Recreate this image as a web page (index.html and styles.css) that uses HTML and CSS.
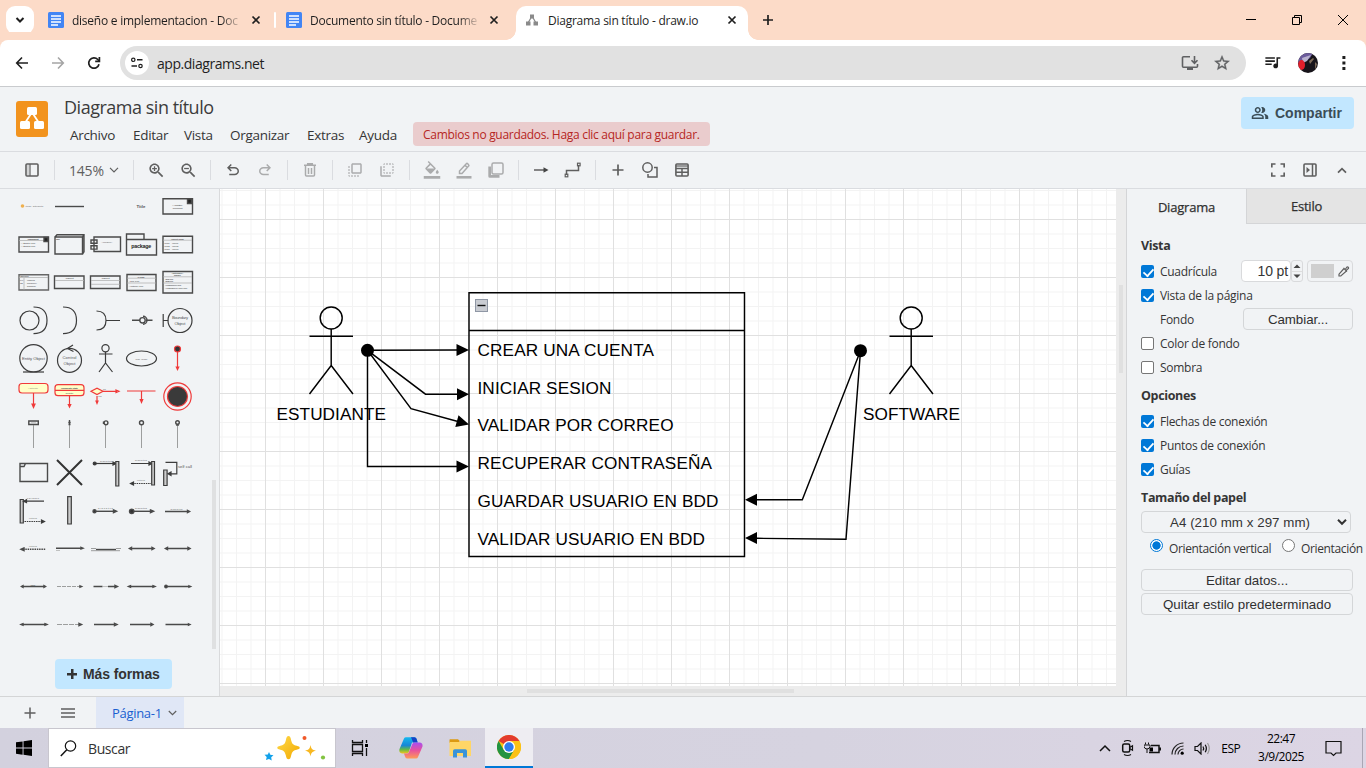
FILE: index.html
```html
<!DOCTYPE html>
<html lang="es">
<head>
<meta charset="utf-8">
<title>Diagrama sin título - draw.io</title>
<link rel="stylesheet" href="styles.css">
</head>
<body>
<div class="screen">
  <div class="tabstrip">
    <div class="tab-search"><svg width="10" height="8" viewBox="0 0 10 8"><path d="M1.5 2l3.500 3.500L8.500 2" class="s dark w2"/></svg></div>
    <div class="tab first">
      <svg width="16" height="16" viewBox="0 0 16 16"><rect width="16" height="16" rx="1.500" fill="#4285f4"/><path d="M3 4h10M3 7h10M3 10h10M3 13h7" stroke="#fff" stroke-width="1.500"/></svg>
      <span class="tab-title fade t1">diseño e implementacion - Doc</span>
      <svg width="10" height="10" viewBox="0 0 10 10"><path d="M1.500 1.500l7 7M8.500 1.500l-7 7" class="s dark w17"/></svg>
    </div>
    <span class="tab-sep"></span>
    <div class="tab second">
      <svg width="16" height="16" viewBox="0 0 16 16"><rect width="16" height="16" rx="1.500" fill="#4285f4"/><path d="M3 4h10M3 7h10M3 10h10M3 13h7" stroke="#fff" stroke-width="1.500"/></svg>
      <span class="tab-title fade t2">Documento sin título - Docume</span>
      <svg width="10" height="10" viewBox="0 0 10 10"><path d="M1.500 1.500l7 7M8.500 1.500l-7 7" class="s dark w17"/></svg>
    </div>
    <div class="tab active">
      <svg width="12" height="12" viewBox="0 0 12 12"><path d="M6 2L2 9M6 2l4 7" stroke="#8a8a8a" stroke-width="1.300"/><path d="M4 .5h4v4H4zM0 7.500h4.500v4H0zM7.500 7.500H12v4H7.500z" fill="#8a8a8a"/></svg>
      <span class="tab-title t3">Diagrama sin título - draw.io</span>
      <svg width="10" height="10" viewBox="0 0 10 10"><path d="M1.500 1.500l7 7M8.500 1.500l-7 7" class="s dark w17"/></svg>
    </div>
    <svg class="newtab" width="12" height="12" viewBox="0 0 12 12"><path d="M6 1v10M1 6h10" class="s dark w17"/></svg>
    <div class="winctl">
      <svg width="12" height="12" viewBox="0 0 12 12"><path d="M1 5.500h10" stroke="#000"/></svg>
      <svg width="12" height="12" viewBox="0 0 12 12"><path d="M1.500 3.500h7v7h-7zM3.500 3.500v-2h7v7h-2" stroke="#000" fill="none"/></svg>
      <svg width="12" height="12" viewBox="0 0 12 12"><path d="M1 1l10 10M11 1L1 11" stroke="#000"/></svg>
    </div>
  </div>

  <div class="navbar">
    <svg width="14" height="14" viewBox="0 0 14 14"><path d="M13 7H2M7 1.500L1.700 7 7 12.500" class="s dark w16"/></svg>
    <svg width="14" height="14" viewBox="0 0 14 14"><path d="M1 7h11M7 1.500L12.300 7 7 12.500" class="s w16" stroke="#a5a5a5"/></svg>
    <svg width="14" height="14" viewBox="0 0 14 14"><path d="M12 8.200A5.200 5.200 0 1 1 10.800 3.500L12.300 5" class="s dark w17"/><path d="M12.400 1v4.300H8.200" class="s dark w17"/></svg>
    <div class="omnibox">
      <span class="site"><svg width="14" height="14" viewBox="0 0 14 14"><circle cx="3.300" cy="3.800" r="1.700" class="s dark"/><circle cx="10.500" cy="10" r="1.700" class="s dark"/><path d="M7 3.800h5.500M1.500 10h5.500" class="s dark w16"/></svg></span>
      <span class="url">app.diagrams.net</span>
      <svg width="18" height="16" viewBox="0 0 18 16"><path d="M9 1.700H2.500a1 1 0 0 0-1 1v8.600a1 1 0 0 0 1 1h13a1 1 0 0 0 1-1V9" class="s w16" stroke="#5f6062"/><path d="M6 12h6v3H6z" fill="#5f6062"/><path d="M13.500 1v7M10.500 5.300l3 3 3-3" class="s w16" stroke="#5f6062"/></svg>
      <svg class="star" width="18" height="18" viewBox="0 0 24 24"><path fill="#5f6062" stroke="#5f6062" stroke-width=".5" d="M22 9.240l-7.190-.62L12 2 9.190 8.630 2 9.240l5.460 4.730L5.820 21 12 17.270 18.180 21l-1.630-7.030L22 9.240zM12 15.400l-3.760 2.270 1-4.280-3.320-2.880 4.380-.38L12 6.100l1.710 4.040 4.380.38-3.320 2.880 1 4.280L12 15.400z"/></svg>
    </div>
    <svg class="music" width="19" height="19" viewBox="0 0 24 24"><path fill="#1f1f1f" d="M15 6H3v2h12V6zm0 4H3v2h12v-2zM3 16h8v-2H3v2zM17 6v8.180c-.31-.11-.65-.18-1-.18-1.660 0-3 1.340-3 3s1.340 3 3 3 3-1.340 3-3V8h3V6h-5z" transform="translate(0 -2)"/></svg>
    <svg class="avatar" width="20" height="20" viewBox="0 0 20 20"><defs><clipPath id="av"><circle cx="10" cy="10" r="10"/></clipPath></defs><g clip-path="url(#av)"><path fill="#17141a" d="M0 0h20v20H0z"/><path fill="#6c5c9c" d="M0 0h15L12 5 8 8 0 10z"/><path fill="#b9b3cf" d="M4 5l9-3-4 6-4 2z"/><ellipse cx="3.500" cy="12" rx="3.500" ry="5" fill="#e21f2b"/><path fill="#7c6a58" d="M11 8l4-3 1 1-4 5zM17 9l2 2-2 6z"/></g></svg>
    <svg class="dots" width="4" height="16" viewBox="0 0 4 16"><path fill="#1f1f1f" d="M.4 1h3v3h-3zM.4 6.500h3v3h-3zM.4 12h3v3h-3z"/></svg>
  </div>

  <div class="apphead">
    <svg class="logo" width="32" height="36" viewBox="0 0 32 36"><rect width="32" height="36" rx="3" fill="#f2931e"/><path d="M15.500 12L9 22M16.500 12L23 22" stroke="#fff" stroke-width="1.800"/><rect x="11" y="6" width="10" height="8" rx="1.500" fill="#fff"/><rect x="4" y="20" width="10" height="8" rx="1.500" fill="#fff"/><rect x="18" y="20" width="10" height="8" rx="1.500" fill="#fff"/></svg>
    <div class="headmid">
      <div class="doctitle"><span>Diagrama sin título</span></div>
      <div class="menu">
        <span class="m1">Archivo</span><span class="m2">Editar</span><span class="m3">Vista</span><span class="m4">Organizar</span><span class="m5">Extras</span><span class="m6">Ayuda</span>
        <div class="unsaved"><span>Cambios no guardados. Haga clic aquí para guardar.</span></div>
      </div>
    </div>
    <div class="share"><svg width="18" height="18" viewBox="0 0 24 24"><path fill="#3b4d57" d="M16.670 13.130C18.040 14.060 19 15.320 19 17v3h4v-3c0-2.180-3.570-3.470-6.330-3.870zM15 12c2.210 0 4-1.790 4-4s-1.790-4-4-4c-.47 0-.91.1-1.330.24C14.500 5.270 15 6.580 15 8s-.5 2.730-1.330 3.760c.42.14.86.24 1.330.24zM9 12c2.210 0 4-1.790 4-4s-1.790-4-4-4-4 1.790-4 4 1.790 4 4 4zm0-6c1.100 0 2 .9 2 2s-.9 2-2 2-2-.9-2-2 .9-2 2-2zm0 7c-2.670 0-8 1.340-8 4v3h16v-3c0-2.660-5.330-4-8-4zm6 5H3v-.99C3.200 16.290 6.300 15 9 15s5.800 1.290 6 2v1z"/></svg><span>Compartir</span></div>
  </div>

  <div class="toolbar">
    <div class="tb"><svg width="14" height="14" viewBox="0 0 14 14"><rect x="1" y="1" width="12" height="12" rx="1" class="s g w16"/><path d="M5 1v12" class="s g"/><path d="M3 2v10" stroke="#b5b5b5"/></svg></div>
    <i></i>
    <div class="zoomsel"><span>145%</span><svg width="10" height="6" viewBox="0 0 10 6"><path d="M1 .8l4 4 4-4" class="s g"/></svg></div>
    <i></i>
    <div class="tb"><svg width="19" height="19" viewBox="0 0 24 24" class="gf"><path d="M15.500 14h-.79l-.28-.27C15.410 12.590 16 11.110 16 9.500 16 5.910 13.090 3 9.500 3S3 5.910 3 9.500 5.910 16 9.500 16c1.610 0 3.090-.59 4.230-1.570l.27.28v.79l5 4.990L20.490 19l-4.990-5zm-6 0C7.010 14 5 11.990 5 9.500S7.010 5 9.500 5 14 7.010 14 9.500 11.990 14 9.500 14z"/><path d="M12.500 10.300h-2.200v2.200H8.700v-2.200H6.500V8.700h2.200V6.500h1.600v2.200h2.200z"/></svg></div>
    <div class="tb"><svg width="19" height="19" viewBox="0 0 24 24" class="gf"><path d="M15.500 14h-.79l-.28-.27C15.410 12.590 16 11.110 16 9.500 16 5.910 13.090 3 9.500 3S3 5.910 3 9.500 5.910 16 9.500 16c1.610 0 3.090-.59 4.230-1.570l.27.28v.79l5 4.990L20.490 19l-4.990-5zm-6 0C7.010 14 5 11.990 5 9.500S7.010 5 9.500 5 14 7.010 14 9.500 11.990 14 9.500 14z"/><path d="M6.500 8.700h6v1.600h-6z"/></svg></div>
    <i></i>
    <div class="tb"><svg width="18" height="18" viewBox="0 0 24 24" class="gf"><path d="M7 19v-2h7.100q1.575 0 2.738-1Q18 15 18 13.500T16.838 11Q15.675 10 14.100 10H7.800l2.600 2.600L9 14 4 9l5-5 1.400 1.400L7.800 8h6.300q2.425 0 4.163 1.575Q20 11.150 20 13.500q0 2.350-1.737 3.925Q16.525 19 14.100 19Z"/></svg></div>
    <div class="tb off"><svg width="18" height="18" viewBox="0 0 24 24" class="gf"><path transform="matrix(-1 0 0 1 24 0)" d="M7 19v-2h7.100q1.575 0 2.738-1Q18 15 18 13.500T16.838 11Q15.675 10 14.100 10H7.800l2.600 2.600L9 14 4 9l5-5 1.400 1.400L7.800 8h6.300q2.425 0 4.163 1.575Q20 11.150 20 13.500q0 2.350-1.737 3.925Q16.525 19 14.100 19Z"/></svg></div>
    <i></i>
    <div class="tb off"><svg width="14" height="14" viewBox="0 0 14 14"><path d="M1 2.300h12M2.500 2.500V12a1 1 0 0 0 1 1h7a1 1 0 0 0 1-1V2.500M4.700 2V.8h4.600V2M5.500 5v6M8.500 5v6" class="s g w15"/></svg></div>
    <i></i>
    <div class="tb off"><svg width="18" height="18" viewBox="0 0 24 24" class="gf"><path d="M3 13h2v-2H3v2zm0 4h2v-2H3v2zm2 4v-2H3c0 1.100.89 2 2 2zM3 9h2V7H3v2zm12 12h2v-2h-2v2zm4-18H9c-1.110 0-2 .9-2 2v10c0 1.100.89 2 2 2h10c1.100 0 2-.9 2-2V5c0-1.100-.9-2-2-2zm0 12H9V5h10v10zm-8 6h2v-2h-2v2zm-4 0h2v-2H7v2z"/></svg></div>
    <div class="tb off"><svg width="18" height="18" viewBox="0 0 24 24" class="gf"><path d="M9 7H7v2h2V7zm0 4H7v2h2v-2zm0-8c-1.110 0-2 .9-2 2h2V3zm4 12h-2v2h2v-2zm6-12v2h2c0-1.100-.9-2-2-2zm-6 0h-2v2h2V3zM9 17v-2H7c0 1.100.89 2 2 2zm10-4h2v-2h-2v2zm0-4h2V7h-2v2zm0 8c1.100 0 2-.9 2-2h-2v2zM5 7H3v12c0 1.100.89 2 2 2h12v-2H5V7zm10-2h2V3h-2v2zm0 12h2v-2h-2v2z"/></svg></div>
    <i></i>
    <div class="tb off"><svg width="18" height="18" viewBox="0 0 24 24" class="gf"><path d="M16.560 8.940L7.620 0 6.210 1.410l2.380 2.380-5.150 5.150c-.59.59-.59 1.540 0 2.120l5.500 5.500c.29.29.68.44 1.060.44s.77-.15 1.060-.44l5.500-5.500c.59-.58.59-1.530 0-2.120zM5.210 10L10 5.210 14.790 10H5.210zM19 11.500s-2 2.170-2 3.500c0 1.100.9 2 2 2s2-.9 2-2c0-1.330-2-3.500-2-3.500zM1 20h22v3.700H1z"/></svg></div>
    <div class="tb off"><svg width="18" height="18" viewBox="0 0 18 18"><path d="M4.500 12.500V10l6.800-7.300a1 1 0 0 1 1.400 0l.9 1a1 1 0 0 1 0 1.400L7 12.500zM10 4.200l2.400 2.400" class="s g w15"/><path d="M1.500 15h15v2.600h-15z" fill="#5f5f5f"/></svg></div>
    <div class="tb off"><svg width="16" height="16" viewBox="0 0 16 16"><path d="M.3 4.500H3V13h8.500v2.700H1.800a1.500 1.500 0 0 1-1.500-1.500z" fill="#5f5f5f"/><rect x="4" y="1" width="11" height="11" rx="1.500" class="s g w15"/></svg></div>
    <i></i>
    <div class="tb"><svg width="16" height="8" viewBox="0 0 16 8"><path d="M1 4h11" class="s g w15"/><path d="M10.500 1.300l5 2.700-5 2.700z" fill="#444"/></svg></div>
    <div class="tb"><svg width="18" height="16" viewBox="0 0 18 16"><path d="M2.500 13V8.500h12V3" class="s g w15"/><rect x="1.200" y="12.200" width="2.600" height="2.600" class="s g"/><rect x="13.500" y="1.200" width="2.600" height="2.600" class="s g"/></svg></div>
    <i></i>
    <div class="tb"><svg width="12" height="12" viewBox="0 0 12 12"><path d="M6 .5v11M.5 6h11" class="s g w17"/></svg></div>
    <div class="tb"><svg width="16" height="16" viewBox="0 0 16 16"><circle cx="5.500" cy="5.500" r="4.700" class="s g w15"/><path d="M12 5.500h3v9.500H6v-3" class="s g w15"/></svg></div>
    <div class="tb"><svg width="14" height="14" viewBox="0 0 14 14"><rect x=".9" y="1" width="12.200" height="12" rx="1" class="s g w16"/><path d="M1 3h12" class="s g"/><path d="M1 5.500h12M1 9.200h12M7 5v8" class="s g w15"/></svg></div>
    <div class="tb-right">
      <div class="tb"><svg width="14" height="14" viewBox="0 0 14 14"><path d="M.8 4.500V1H4.500M9.500 1h3.700v3.500M13.200 9.500V13H9.500M4.500 13H.8V9.500" class="s g w17"/></svg></div>
      <div class="tb"><svg width="14" height="14" viewBox="0 0 14 14"><rect x="1" y="1" width="12" height="12" rx="1" class="s g w16"/><path d="M9.500 1v12" class="s g w15"/><path d="M3.500 4l3.500 3-3.500 3z" fill="#5f5f5f"/></svg></div>
      <div class="tb"><svg width="10" height="7" viewBox="0 0 10 7"><path d="M1 5.700l4-4 4 4" class="s g w17"/></svg></div>
    </div>
  </div>

  <div class="main">
    <div class="shapes">
      <div class="palette">
        <svg viewBox="15 187 36 38"><circle cx="22.500" cy="206" r="1.800" fill="#efb04e" stroke="none"/><text x="25.500" y="207" class="tt" textLength="18">item: attribute</text></svg>
        <svg viewBox="51 187 36 38"><path d="M55 206.500h29"/></svg>
        <svg viewBox="87 187 36 38"></svg>
        <svg viewBox="123 187 36 38"><text x="141" y="208" class="ti b" text-anchor="middle" textLength="9">Title</text></svg>
        <svg viewBox="159 187 36 38"><path d="M163 198.700h29.500v15.300H163z"/><path d="M187.500 199h4v4.500h-4z" fill="#222"/><text x="177.500" y="206" class="tt" text-anchor="middle" textLength="11">«Annotation»</text><text x="177.500" y="208.800" class="tt" text-anchor="middle" textLength="10">Component</text></svg>

        <svg viewBox="15 225 36 38"><path d="M19 237h29.500v15H19z"/><path d="M19 240.500h29" class="l"/><path d="M44 237.500h4v4h-4z" fill="#222"/><text x="33" y="240" class="tt b" text-anchor="middle" textLength="11">Component</text><text x="20.500" y="244" class="tt" textLength="15">+ Attribute1: Type</text><text x="20.500" y="246.800" class="tt" textLength="15">+ Attribute2: Type</text></svg>
        <svg viewBox="51 225 36 38"><path d="M55 237h27.500v17H55zM55 237l2-2.200h27v17l-1.500 2.200M82.500 237l1.500-2"/><text x="56" y="240" class="tt" textLength="4">Block</text></svg>
        <svg viewBox="87 225 36 38"><path d="M94 251.500V237h26.500v14.500zM91 240h6v3.300h-6zM91 245.800h6v3.300h-6z"/><text x="107" y="242.500" class="tt" text-anchor="middle" textLength="11">«Module»</text></svg>
        <svg viewBox="123 225 36 38"><path d="M126.500 239.500V234H144v5.500M126.500 239.500h30V255h-30z"/><text x="141.300" y="248.300" class="pk" text-anchor="middle" textLength="20">package</text></svg>
        <svg viewBox="159 225 36 38"><path d="M163 236.200h29.500v16.500H163z"/><path d="M163 240.200h29" class="l"/><text x="177.500" y="239.500" class="tt b" text-anchor="middle" textLength="13">Object:Type</text><text x="164.500" y="243.500" class="tt" textLength="14">field1 = value1</text><text x="164.500" y="246.500" class="tt" textLength="14">field2 = value2</text><text x="164.500" y="249.500" class="tt" textLength="14">field3 = value3</text></svg>

        <svg viewBox="15 263 36 38"><path d="M19 274.700h29.500V290H19z" stroke="#666"/><path d="M19 277.500h29M24 278v12" class="l"/><text x="20" y="277" class="tt" textLength="9">Tablename</text><text x="20" y="280.500" class="tt">PK</text><text x="27" y="280.500" class="tt" textLength="8">uniqueId</text><text x="20" y="283.500" class="tt" textLength="3">FK1</text><text x="27" y="283.500" class="tt" textLength="10">foreignKey</text><text x="27" y="286.500" class="tt" textLength="9">fieldname</text></svg>
        <svg viewBox="51 263 36 38"><path d="M54.500 276h29.500v12.500H54.500z"/><path d="M55 280.500h29" class="l"/><text x="69.500" y="279.300" class="tt b" text-anchor="middle" textLength="8">Object</text></svg>
        <svg viewBox="87 263 36 38"><path d="M90.500 276H120v12.500H90.500z"/><path d="M91 280.500h29M91 284.300h29" class="l"/><text x="105.500" y="279.300" class="tt b" text-anchor="middle" textLength="8">Object</text></svg>
        <svg viewBox="123 263 36 38"><path d="M127 274.500h29v16h-29z"/><path d="M127 278.200h29M127 283h29" class="l"/><text x="141" y="277.500" class="tt b" text-anchor="middle" textLength="7">Class</text><text x="128.500" y="281.500" class="tt" textLength="11">+ field: Type</text><text x="128.500" y="286.500" class="tt" textLength="15">+ method(): Type</text></svg>
        <svg viewBox="159 263 36 38"><path d="M163 271.500h29.500V293H163z"/><path d="M163 276.800h29M163 283h29" class="l"/><text x="177.500" y="274" class="tt b" text-anchor="middle" textLength="12">«Interface»</text><text x="177.500" y="276.300" class="tt b" text-anchor="middle" textLength="7">Name</text><text x="164.500" y="279.600" class="tt" textLength="9">+ field1: Type</text><text x="164.500" y="282.200" class="tt" textLength="9">+ field2: Type</text><text x="164.500" y="286" class="tt" textLength="17">+ method1(Type): Type</text><text x="164.500" y="288.700" class="tt" textLength="23">+ method2(Type, Type): Type</text></svg>

        <svg viewBox="15 301 36 38" class="m"><circle cx="29.500" cy="320.500" r="9.500"/><path d="M33.500 307c8 0 13.500 3 13.500 13.300s-5.500 13.300-13.500 13.300"/></svg>
        <svg viewBox="51 301 36 38" class="m"><path d="M63 307c8 0 13.500 3 13.500 13.300s-5.500 13.300-13.500 13.300"/></svg>
        <svg viewBox="87 301 36 38" class="m"><path d="M96.500 311c6 0 9.500 3 9.500 9.500s-3.500 9.500-9.500 9.500M106 320.500h14"/></svg>
        <svg viewBox="123 301 36 38"><path d="M132 320.300h8M146 320.300h6.500"/><circle cx="142.500" cy="320.300" r="2.700"/><path d="M143 316.300a4 4 0 0 1 0 8"/></svg>
        <svg viewBox="159 301 36 38" class="m"><path d="M163.200 314v13M163.200 320.500h5"/><circle cx="180" cy="320.500" r="12"/><text x="180" y="319" class="t4" text-anchor="middle" textLength="16">Boundary</text><text x="180" y="324.500" class="t4" text-anchor="middle" textLength="11">Object</text></svg>

        <svg viewBox="15 339 36 38" class="m"><circle cx="33.500" cy="358.300" r="13.700"/><path d="M23 372h21"/><text x="33.500" y="359.500" class="t4" text-anchor="middle" textLength="23">Entity Object</text></svg>
        <svg viewBox="51 339 36 38" class="m"><circle cx="69.500" cy="360.300" r="12"/><path d="M73 345l-5.500 3.500 6 3"/><text x="69.500" y="359.300" class="t4" text-anchor="middle" textLength="14">Control</text><text x="69.500" y="364.500" class="t4" text-anchor="middle" textLength="12">Object</text></svg>
        <svg viewBox="87 339 36 38" class="m"><circle cx="105.500" cy="348.300" r="3.600"/><path d="M99 354h13.500M105.500 352v11M99 372l6.500-9 7 9"/></svg>
        <svg viewBox="123 339 36 38" class="m"><ellipse cx="141.500" cy="358.500" rx="15" ry="7.500"/><text x="141.500" y="359.500" class="tt" text-anchor="middle" textLength="12">Use Case</text></svg>
        <svg viewBox="159 339 36 38" class="r"><path d="M177.500 352v17M176.300 367l1.200 2.500 1.200-2.500z"/><circle cx="177.500" cy="349" r="3" fill="#333"/></svg>

        <svg viewBox="15 377 36 38" class="r"><rect x="19" y="383.500" width="29" height="9.500" rx="3" fill="#ffffc8"/><path d="M33.500 393v13M32 404l1.500 3.500 1.500-3.500z"/><text x="33" y="389.300" class="tt" text-anchor="middle" textLength="10">Activity</text></svg>
        <svg viewBox="51 377 36 38" class="r"><rect x="55" y="384.700" width="29" height="11" rx="3" fill="#ffffc8"/><path d="M55 390.300h29M69.500 396v10M68.300 404.500l1.200 2.500 1.200-2.500z"/><text x="69.500" y="388.500" class="tt b" text-anchor="middle" textLength="17">Composite State</text><text x="69.500" y="393.800" class="tt" text-anchor="middle" textLength="8">Subtitle</text></svg>
        <svg viewBox="87 377 36 38" class="r"><path d="M91 391.300l6-3.200 6 3.200-6 3.200z" fill="#ffffc8"/><path d="M103 391.300h14M116 390l3 1.300-3 1.300zM97 396v6M96 401l1 2.500 1-2.500z"/><text x="103" y="390" class="tt">no</text><text x="97.500" y="396.500" class="tt">yes</text></svg>
        <svg viewBox="123 377 36 38" class="r"><path d="M127 391h28.500M141.500 391v10M140.300 399.500l1.200 3 1.200-3z"/></svg>
        <svg viewBox="159 377 36 38" class="r"><circle cx="177.500" cy="396.500" r="13.700"/><circle cx="177.500" cy="396.500" r="10" fill="#3a3a3a"/></svg>

        <svg viewBox="15 415 36 38"><path d="M28.800 421h9.500v3.500h-9.500z"/><path d="M33.500 425v23" class="l d"/><path d="M31 422.800h5" class="l"/></svg>
        <svg viewBox="51 415 36 38"><path d="M69.500 425v23" class="l d"/><path d="M69.500 420v5M68.300 422.500h2.400M68.500 424.500h2"/></svg>
        <svg viewBox="87 415 36 38"><path d="M105.500 425v23" class="l d"/><circle cx="106" cy="422.800" r="1.900"/><path d="M103.500 421.500v2.500"/></svg>
        <svg viewBox="123 415 36 38"><path d="M141.500 425v23" class="l d"/><circle cx="141.500" cy="422.800" r="2"/></svg>
        <svg viewBox="159 415 36 38"><path d="M177.500 425v23" class="l d"/><circle cx="177.500" cy="422.500" r="1.800"/><path d="M176 425h3"/></svg>

        <svg viewBox="15 453 36 38"><path d="M20 463.500h27.500v18H20zM20 466.500h4l1.500-3"/></svg>
        <svg viewBox="51 453 36 38" class="x"><path d="M57 460l25 25M82 460l-25 25"/></svg>
        <svg viewBox="87 453 36 38" class="m"><path d="M94 463.500h21"/><circle cx="94.700" cy="463.500" r="1.500" fill="#333"/><path d="M113 462l3 1.500-3 1.500z" fill="#333"/><path d="M115.800 461.500h3V486h-3z" fill="#ccc"/><text x="106" y="462" class="tt" text-anchor="middle" textLength="12">dispatch</text></svg>
        <svg viewBox="123 453 36 38" class="m"><path d="M131 463.500h20M149 462l3 1.500-3 1.500z"/><path d="M151.700 461.500h2.800V485h-2.800z" fill="#ccc"/><path d="M132 483.500h19" stroke-dasharray="1.500 .8"/><path d="M133.500 482l-3 1.500 3 1.500z" fill="#333"/><text x="141" y="461" class="tt" text-anchor="middle" textLength="12">dispatch</text><text x="141" y="481" class="tt" text-anchor="middle" textLength="8">return</text></svg>
        <svg viewBox="159 453 36 38" class="m"><path d="M163.700 470h3.400v15.500h-3.400z" fill="#ccc"/><path d="M165.500 462.300h11.300v11.500H168M171 472l-3 1.800 3 1.700z"/><text x="178" y="468" class="t4" textLength="14">self call</text></svg>

        <svg viewBox="15 491 36 38" class="m"><path d="M20.200 499.500h3.100V523h-3.100z" fill="#ccc"/><path d="M24 501.200h20M26.500 499.800l-3 1.400 3 1.400z"/><path d="M24.500 521.500h18" stroke-dasharray="1.500 .8"/><path d="M41.500 520l3 1.500-3 1.500z" fill="#333"/><text x="33" y="499" class="tt" text-anchor="middle" textLength="12">callback</text><text x="33" y="519" class="tt" text-anchor="middle" textLength="8">return</text></svg>
        <svg viewBox="51 491 36 38" class="m"><path d="M67.700 496.700h3.600V524h-3.600z" fill="#ccc"/></svg>
        <svg viewBox="87 491 36 38"><path d="M94 511.300h22"/><circle cx="94.500" cy="511.300" r="1.500" fill="#333"/><path d="M113.500 510l3 1.300-3 1.300z" fill="#333"/><text x="105.500" y="509" class="tt" text-anchor="middle" textLength="15">dispatch</text></svg>
        <svg viewBox="123 491 36 38"><path d="M132 511.300h21"/><circle cx="131.700" cy="511.300" r="2.200" fill="#333"/><path d="M150.500 510l3 1.300-3 1.300z" fill="#333"/><text x="141" y="509" class="tt" text-anchor="middle" textLength="12">dispatch</text></svg>
        <svg viewBox="159 491 36 38"><path d="M165 511.500h24M187.500 510.500l2 1-2 1z"/><text x="176.500" y="510" class="tt" text-anchor="middle" textLength="12">dispatch</text></svg>

        <svg viewBox="15 529 36 38"><path d="M23 549.200h23" stroke-dasharray="1.500 .8"/><path d="M24 548l-3 1.300 3 1.300z" fill="#333"/><text x="33" y="547" class="tt" text-anchor="middle" textLength="8">return</text></svg>
        <svg viewBox="51 529 36 38"><path d="M56 548.200h26M81 547.400l2 .8-2 .8z"/><path d="M56 550.500h4" class="l"/></svg>
        <svg viewBox="87 529 36 38"><path d="M96 549.500h20"/><path d="M91 548.500h5M116 548.500h5M91 550.700h29" class="l d"/></svg>
        <svg viewBox="123 529 36 38"><path d="M130 548.500h23M131.500 547.500l-2 1 2 1zM152 547.500l2 1-2 1z"/></svg>
        <svg viewBox="159 529 36 38"><path d="M166 548.500h23M167.500 547.500l-2 1 2 1zM188 547.500l2 1-2 1z"/></svg>

        <svg viewBox="15 567 36 38"><path d="M21.500 586.500h24M23 585.700l-1.500.8 1.500.8zM44 585.700l1.500.8-1.500.8z"/><text x="33" y="586" class="tt" text-anchor="middle" textLength="5">name</text></svg>
        <svg viewBox="51 567 36 38"><path d="M57 586.500h24" class="l d" stroke-dasharray="4 1"/><path d="M80 585.900l1.500.6-1.500.6z"/></svg>
        <svg viewBox="87 567 36 38"><path d="M93.500 586.500h9M108 586.500h7M115 585.300l2.500 1.200-2.500 1.200z"/><path d="M103 586.500h5" class="l"/></svg>
        <svg viewBox="123 567 36 38"><path d="M129 586.500h25M130.500 585.700l-2 .8 2 .8zM153 585.700l2 .8-2 .8z"/></svg>
        <svg viewBox="159 567 36 38"><path d="M166 586.500h23M189 585.900l1.500.6-1.500.6z"/><circle cx="166" cy="586.500" r="1.200" fill="#333"/></svg>

        <svg viewBox="15 605 36 38"><path d="M21.500 624.500h24M23 623.700l-2 .8 2 .8zM45 623.700l2 .8-2 .8z"/></svg>
        <svg viewBox="51 605 36 38"><path d="M57 624.500h22" class="l d" stroke-dasharray="5 1"/><path d="M79 623.400l2.500 1.100-2.500 1.100z"/></svg>
        <svg viewBox="87 605 36 38"><path d="M94 624.500h20M114.500 623.400l2.500 1.100-2.500 1.100z"/></svg>
        <svg viewBox="123 605 36 38"><path d="M130 624.500h22M151 623.400l2 1.100-2 1.100z"/></svg>
        <svg viewBox="159 605 36 38"><path d="M165.500 624.500h24M188.500 623.800l1.500.7-1.500.7z"/></svg>
      </div>
      <div class="more"><span class="plus"></span><span>Más formas</span></div>
      <span class="vscroll"></span>
    </div>

    <div class="canvas">
      <svg class="sheet" width="896" height="497" viewBox="220 189 896 497">
        <defs>
          <pattern id="grid" x="265" y="277" width="58" height="58" patternUnits="userSpaceOnUse">
            <path d="M15 0v58M29.500 0v58M44 0v58M0 15h58M0 29.500h58M0 44h58" stroke="#f3f3f3"/>
            <path d="M.5 0v58M0 .5h58" stroke="#e0e0e0"/>
          </pattern>
        </defs>
        <rect x="220" y="189" width="896" height="497" fill="#fff"/>
        <rect x="220" y="189" width="896" height="497" fill="url(#grid)"/>
        <g class="ink">
          <path d="M469 292.700h275.500V556.500H469zM469 330.500h275.500"/>
          <circle cx="331.200" cy="318" r="11"/><path d="M331.200 329v36.500M309.500 336.200H353M309.500 394l21.700-28.500L353 394"/>
          <circle cx="911.200" cy="318" r="11"/><path d="M911.200 329v36.500M889.500 336.200H933M889.500 394l21.700-28.500L933 394"/>
          <path d="M367.500 350.300l90-.4M367.500 350.300l58 43.900h32M367.500 350.300l43.500 58.300 46 12.700M367.500 350.300v116.200h90M860.500 350.700l-58.200 149H757M860.500 350.700L846 539.200l-89-.9"/>
        </g>
        <circle cx="367.500" cy="350.300" r="6.500"/><circle cx="860.500" cy="350.700" r="6.500"/>
        <path d="M469 349.900l-12.500-6v12zM469 394.200l-12-6v12zM469 424.500l-10.500-9.200-3.200 11.600zM469 466.500l-12.500-6v12zM745 499.700l12-6v12zM745 538l12-6v12z"/>
        <rect x="475.500" y="299.500" width="12" height="12" fill="#c9ccd2" stroke="#8f97a5"/><path d="M477.500 305.500h8" stroke="#111" stroke-width="1.400"/>
        <g class="label">
          <text x="276.500" y="420" textLength="109.500">ESTUDIANTE</text>
          <text x="863" y="420" textLength="97">SOFTWARE</text>
          <text x="477.500" y="356" textLength="176.500">CREAR UNA CUENTA</text>
          <text x="477.500" y="393.700" textLength="134">INICIAR SESION</text>
          <text x="477.500" y="431.300" textLength="196">VALIDAR POR CORREO</text>
          <text x="477.500" y="469" textLength="234.500">RECUPERAR CONTRASEÑA</text>
          <text x="477.500" y="506.800" textLength="241">GUARDAR USUARIO EN BDD</text>
          <text x="477.500" y="544.500" textLength="227.500">VALIDAR USUARIO EN BDD</text>
        </g>
      </svg>
      <div class="vbar"><span></span></div>
      <div class="hbar"><span></span></div>
    </div>

    <div class="format">
      <div class="ftabs"><div class="on"><span>Diagrama</span></div><div><span>Estilo</span></div></div>
      <div class="fbody">
        <h4 class="h1">Vista</h4>
        <div class="row"><b class="ck"></b><span class="f1">Cuadrícula</span>
          <div class="gridctl"><div class="num">10 pt</div><div class="spin"><svg width="10" height="20" viewBox="0 0 10 20"><path d="M1.500 7L5 3.500 8.500 7zM1.500 13.500L5 17l3.500-3.500z" fill="#444"/><path d="M0 10.500h11" stroke="#ddd"/></svg></div><div class="colour"><i></i><svg width="12" height="12" viewBox="0 0 12 12"><path d="M6 3.500l2.500 2.500-5.700 5H1V9.200zM5.500 3l3.500 3.500M7.500 4L9 2a1.200 1.200 0 0 1 1.500 1.500L8.500 5" class="s g"/></svg></div></div></div>
        <div class="row"><b class="ck"></b><span class="f2">Vista de la página</span></div>
        <div class="row"><span class="f3 indent">Fondo</span><div class="btn change">Cambiar...</div></div>
        <div class="row"><b class="ck no"></b><span class="f4">Color de fondo</span></div>
        <div class="row"><b class="ck no"></b><span class="f5">Sombra</span></div>
        <h4 class="h2">Opciones</h4>
        <div class="row"><b class="ck"></b><span class="f6">Flechas de conexión</span></div>
        <div class="row"><b class="ck"></b><span class="f7">Puntos de conexión</span></div>
        <div class="row"><b class="ck"></b><span class="f8">Guías</span></div>
        <h4 class="h3">Tamaño del papel</h4>
        <div class="select"><span>A4 (210 mm x 297 mm)</span><svg width="10" height="8" viewBox="0 0 10 8"><path d="M1 1.800l4 4 4-4" class="s w2" stroke="#333"/></svg></div>
        <div class="radios"><b class="rd on"></b><span class="f9">Orientación vertical</span><b class="rd r2"></b><span class="f10">Orientación</span></div>
        <div class="btn wide b1">Editar datos...</div>
        <div class="btn wide b2">Quitar estilo predeterminado</div>
      </div>
    </div>
  </div>

  <div class="pages">
    <svg class="pp" width="12" height="12" viewBox="0 0 12 12"><path d="M6 .5v11M.5 6h11" class="s g w15"/></svg>
    <svg class="pm" width="14" height="10" viewBox="0 0 14 10"><path d="M0 1h14M0 5h14M0 9h14" class="s g w15"/></svg>
    <div class="page"><span>Página-1</span><svg width="9" height="6" viewBox="0 0 9 6"><path d="M.8 1l3.700 3.700L8.200 1" class="s g"/></svg></div>
  </div>

  <div class="taskbar">
    <div class="start"><svg width="16" height="16" viewBox="0 0 16 16"><path d="M0 2.300L6.600 1.400v6.200H0zM7.500 1.200L16 0v7.600H7.500zM0 8.500h6.600v6.200L0 13.800zM7.500 8.500H16V16l-8.500-1.200z"/></svg></div>
    <div class="search">
      <svg width="17" height="17" viewBox="0 0 17 17"><circle cx="10.500" cy="6" r="5.200" class="s" stroke="#111"/><path d="M6.800 9.800L.8 16" class="s w15" stroke="#111"/></svg>
      <span>Buscar</span>
      <svg class="spark" width="62" height="26" viewBox="0 0 62 26"><defs><linearGradient id="gold" x2="1" y2="1"><stop stop-color="#ffd94a"/><stop offset="1" stop-color="#f2a900"/></linearGradient></defs><path d="M24.500 1c1.500 0 2 1 2.700 4.500 1 4 2.500 4.500 5.500 5.200 2 .5 3 1 3 2s-1 1.500-3 2c-3 .7-4.500 1.500-5.500 5.500-.7 3-1.200 4-2.700 4s-2-1-2.700-4c-1-4-2.500-4.800-5.500-5.500-2-.5-3-1-3-2s1-1.500 3-2c3-.7 4.500-1.200 5.500-5.200C22.500 2 23 1 24.500 1z" fill="url(#gold)"/><path d="M46.500 10c.8 4 1.500 4.700 5.500 5.700-4 1-4.700 1.700-5.500 5.700-.8-4-1.500-4.700-5.500-5.700 4-1 4.700-1.700 5.500-5.700z" fill="#f8b821"/><path d="M5 17l1.300 2.800 3.200.5-2.300 2 .5 3.200L5 24l-3 1 .7-3L.5 19.800l3.300-.3z" fill="#12a1ea"/><circle cx="40.500" cy="3" r="2" fill="#f0592a"/><circle cx="59" cy="22.500" r="2.100" fill="#82c341"/></svg>
    </div>
    <div class="app a1"><svg width="18" height="16" viewBox="0 0 18 16"><path d="M1.500 0v2.500h10V0M1.500 16v-2.500h10V16M1.500 4.500h10v7h-10zM15.500 0v3M15.500 8v8" stroke="#111" stroke-width="1.300" fill="none"/><path d="M14 4h3v3h-3z"/></svg></div>
    <div class="app a2"><svg width="24" height="22" viewBox="0 0 24 22"><defs><linearGradient id="c1" x2="0" y2="1"><stop stop-color="#14b8ee"/><stop offset=".5" stop-color="#1686d8"/><stop offset=".75" stop-color="#61b84a"/><stop offset="1" stop-color="#f4c51b"/></linearGradient><linearGradient id="c2" x2="0" y2="1"><stop stop-color="#a84ff0"/><stop offset=".5" stop-color="#e8529b"/><stop offset="1" stop-color="#ff9b55"/></linearGradient></defs><path d="M5 1.500Q5.500.3 7 .3h8.500q1.500 0 2 1.500l1.200 3.700H13L9.800 15q-.5 1.500-2 1.500H3Q-.5 16 .5 12z" fill="url(#c1)"/><path d="M12 .3h3.500q1.500 0 2 1.500l1.200 3.700h-4.500z" fill="#1643c5"/><path d="M19 20q-.5 1.500-2 1.500H8q-1.500 0-2-2l-1-3h3q1.500 0 2-1.500L13.300 7q.5-1.500 2-1.500H21q3 .5 2.500 4z" fill="url(#c2)"/></svg></div>
    <div class="app a3"><svg width="22" height="19" viewBox="0 0 22 19"><path d="M.5 1Q.5.3 1 .3h8l1.500 1.400V4H.5z" fill="#dc9a12"/><path d="M.5 3h9.700l1.300-1.300H22V17H.5z" fill="#ffd667"/><path d="M4 18.500V12q0-1.700 1.700-1.700h10.600q1.700 0 1.700 1.700v6.500h-4V14H8v4.500z" fill="#3a93d8"/></svg></div>
    <div class="app cur"><svg width="24" height="24" viewBox="0 0 24 24"><circle cx="12" cy="12" r="12" fill="#fbc116"/><path d="M12 12L1.600 6A12 12 0 0 1 22.400 6z" fill="#e33b2e"/><path d="M1.600 6A12 12 0 0 0 12 24l5.200-9L6.800 15z" fill="#229342"/><path d="M22.400 6H12v6l5.200 3L12 24A12 12 0 0 0 22.400 6z" fill="#fbc116"/><circle cx="12" cy="12" r="6" fill="#fff"/><circle cx="12" cy="12" r="4.700" fill="#2f7bee"/></svg></div>
    <div class="tray">
      <svg width="12" height="8" viewBox="0 0 12 8"><path d="M1 7l5-5 5 5" class="s w15" stroke="#111"/></svg>
      <svg width="13" height="18" viewBox="0 0 13 18"><path d="M3 2.500q3.500-2 7 0M3 15.500q3.500 2 7 0" class="s" stroke="#111"/><rect x="1.700" y="5" width="7" height="8" rx="1.500" class="s w15" stroke="#111"/><path d="M9 8.300l2.500-1.500v4.500L9 9.800" class="s" stroke="#111"/></svg>
      <svg width="17" height="13" viewBox="0 0 17 13"><path d="M7 3.500h8v7H5M16.300 5.500v3" class="s w15" stroke="#111"/><path d="M1.500.5v2M4.500.5v2M0 3h6v1.500Q5.500 7 3 7T0 4.500zM3 7v4" stroke="#111" fill="none"/><path d="M5.500 5.500H9v4H5.500z"/></svg>
      <svg width="13" height="13" viewBox="0 0 13 13"><path d="M1 12.500A11.500 11.500 0 0 1 12.500 1M4 12.500A8.500 8.500 0 0 1 12.500 4M7 12.500A5.500 5.500 0 0 1 12.500 7" class="s" stroke="#222"/><circle cx="11.200" cy="11.200" r="1.600"/></svg>
      <svg width="17" height="13" viewBox="0 0 17 13"><path d="M1 4.500h2.500L7 1v11L3.500 8.500H1z" class="s" stroke="#111"/><path d="M9 4.500q1.300 2 0 4M11.200 2.800q2.300 3.700 0 7.400" class="s" stroke="#111"/><path d="M13.500 1q3.500 5.500 0 11" class="s" stroke="#999"/></svg>
      <span class="lang">ESP</span>
      <div class="clock"><span>22:47</span><span>3/9/2025</span></div>
      <svg width="17" height="17" viewBox="0 0 17 17"><path d="M1 1.500h15v11.500h-5L8.500 15.500 6 13H1z" class="s" stroke="#111"/></svg>
      <span class="edge"></span>
    </div>
  </div>
</div>
</body>
</html>
```
FILE: styles.css
```css
* { box-sizing: border-box; }
body { margin: 0; font-family: "Open Sans", "Noto Sans", sans-serif; font-size: 12px; color: #353535; }
svg { display: block; flex: none; }
.screen { width: 1366px; height: 768px; overflow: hidden; display: flex; flex-direction: column; background: #f1f3f5; }
span { white-space: nowrap; }
.s { fill: none; stroke-width: 1.2; }
.dark { stroke: #1f1f1f; }
.g { stroke: #5f5f5f; }
.gf { fill: #5f5f5f; }
.w15 { stroke-width: 1.5; }
.w16 { stroke-width: 1.6; }
.w17 { stroke-width: 1.7; }
.w2 { stroke-width: 2; }

/* browser chrome */
.tabstrip { height: 40px; background: #fcdbc8; display: flex; align-items: center; padding-left: 6px; flex: none; }
.tab-search { width: 28px; height: 28px; border-radius: 9px; background: #fff; display: flex; align-items: center; justify-content: center; }
.tab { display: flex; align-items: center; height: 34px; }
.tab.first { margin-left: 14px; width: 226px; }
.tab.second { margin-left: 10px; width: 230px; }
.tab-title { font-size: 12px; color: #1f1f1f; margin-left: 8px; flex: none; line-height: 18px; height: 17px; }
.fade { width: 169px; -webkit-mask-image: linear-gradient(90deg, #000 88%, transparent 101%); mask-image: linear-gradient(90deg, #000 88%, transparent 101%); margin-right: 10px; }
.t1, .t2, .t3 { letter-spacing: -.25px; }
.tab-sep { width: 2px; height: 16px; background: #fff; border-radius: 1px; }
.tab.active { background: #fff; align-self: flex-end; width: 232px; border-radius: 10px 10px 0 0; padding: 0 0 6px 10px; position: relative; }
.tab.active::before, .tab.active::after { content: ""; position: absolute; bottom: 0; width: 10px; height: 10px; }
.tab.active::before { left: -10px; background: radial-gradient(circle at 0 0, transparent 9.500px, #fff 10px); }
.tab.active::after { right: -10px; background: radial-gradient(circle at 100% 0, transparent 9.500px, #fff 10px); }
.t3 { width: 169px; margin-left: 10px; margin-right: 10px; }
.newtab { margin-left: 14px; }
.winctl { display: flex; gap: 34px; margin-left: auto; padding-right: 17px; }
.navbar { height: 47px; flex: none; background: #fff; border-bottom: 1px solid #c9cbce; display: flex; align-items: center; padding: 0 20px 0 15px; border-radius: 8px 8px 0 0; box-shadow: 0 -8px 0 0 #fcdbc8; }
.tab.active { z-index: 1; }
.navbar > svg:nth-child(2) { margin-left: 22px; }
.navbar > svg:nth-child(3) { margin-left: 22px; }
.omnibox { margin-left: 19px; width: 1126px; height: 34px; border-radius: 17px; background: #e1e1e1; display: flex; align-items: center; padding: 0 15px 0 5px; }
.site { width: 24px; height: 24px; border-radius: 12px; background: #fff; display: flex; align-items: center; justify-content: center; }
.url { font-size: 14px; letter-spacing: -.46px; color: #1f1f1f; margin-left: 8px; margin-right: auto; }
.star { margin-left: 14px; }
.music { margin-left: 17px; }
.avatar { margin-left: 16px; }
.dots { margin-left: 24px; }

/* document header */
.apphead { height: 65px; flex: none; display: flex; border-bottom: 1px solid #dadce0; padding: 10px 12px 0 16px; }
.logo { margin-top: 4px; }
.headmid { margin-left: 16px; flex: 1; }
.doctitle { font-size: 18px; line-height: 21px; color: #3c3c3c; letter-spacing: -.48px; height: 25px; }
.menu { display: flex; align-items: center; height: 24px; font-size: 13.500px; color: #353535; padding-left: 6px; letter-spacing: -.3px; }
.menu > span { flex: none; padding-top: 2px; }
.m1 { width: 63px; } .m2 { width: 51px; } .m3 { width: 46px; } .m4 { width: 77px; } .m5 { width: 52px; } .m6 { width: 54px; }
.unsaved { width: 297px; height: 24px; background: #eacccd; color: #b62623; font-size: 12px; letter-spacing: -.3px; border-radius: 4px; display: flex; align-items: center; padding: 1px 0 0 10px; }
.share { width: 113px; height: 32px; background: #c2e7ff; border-radius: 4px; display: flex; align-items: center; padding-left: 10px; gap: 6px; color: #3b4d57; font: bold 14px "Liberation Sans", Arial, sans-serif; }

/* toolbar */
.toolbar { height: 37px; flex: none; display: flex; align-items: center; padding: 0 8px 0 16px; border-bottom: 1px solid #dadce0; }
.toolbar > i { width: 1px; height: 20px; margin: 0 6px; background: #dadce0; flex: none; }
.tb { width: 32px; height: 32px; display: flex; align-items: center; justify-content: center; flex: none; }
.off { opacity: .48; }
.zoomsel { width: 66px; padding-left: 8px; display: flex; align-items: center; gap: 5px; font-size: 14px; letter-spacing: -.2px; color: #5f5f5f; }
.tb-right { margin-left: auto; display: flex; }

/* shape sidebar */
.main { height: 508px; flex: none; display: flex; border-bottom: 1px solid #d4d5d6; }
.shapes { width: 220px; border-right: 1px solid #d9dadc; position: relative; overflow: hidden; }
.palette { display: grid; grid-template-columns: repeat(5, 36px); grid-auto-rows: 38px; margin: -2px 0 0 15px; }
.palette svg { width: 36px; height: 38px; fill: none; stroke: #4a4a4a; stroke-width: 1.4; overflow: visible; }
.palette .m { stroke: #3c3c3c; stroke-width: 1.2; }
.palette .x { stroke: #333; stroke-width: 2; }
.palette .r { stroke: #f03a3a; stroke-width: 1.2; }
.palette .l { stroke: #aaa; stroke-width: .7; }
.palette .d { stroke: #888; stroke-width: .8; }
.palette text { stroke: none; fill: #555; font-family: "Liberation Sans", Arial, sans-serif; }
.tt { font-size: 2.500px; }
.ti { font-size: 4.400px; }
.t4 { font-size: 4.200px; }
.b { font-weight: bold; }
.palette .pk { font-size: 5.300px; font-weight: bold; fill: #222; }
.more { width: 117px; height: 30px; margin: 16px 0 0 55px; background: #c2e7ff; border-radius: 4px; display: flex; align-items: center; padding-left: 12px; gap: 6px; font: bold 14px "Liberation Sans", Arial, sans-serif; letter-spacing: -.1px; color: #333; }
.plus { width: 10px; height: 10px; background: linear-gradient(#333, #333) 50% 50%/10px 2.500px no-repeat, linear-gradient(#333, #333) 50% 50%/2.500px 10px no-repeat; }
.vscroll { position: absolute; right: 3px; top: 291px; width: 4px; height: 169px; background: #dfe0e1; }

/* drawing area */
.canvas { width: 906px; display: grid; grid-template-columns: 896px 10px; grid-template-rows: 497px 10px; background: #ececec; }
.sheet { overflow: hidden; }
.ink { fill: none; stroke: #000; stroke-width: 1.45; }
.label { font: 17.200px "Liberation Sans", Arial, sans-serif; }
.vbar { padding: 96px 0 0 3px; }
.vbar span { display: block; width: 4px; height: 88px; background: #e0e0e0; }
.hbar { padding: 3px 0 0 307px; }
.hbar span { display: block; width: 267px; height: 4px; background: #e0e0e0; }

/* format panel */
.format { width: 240px; border-left: 1px solid #d4d5d7; overflow: hidden; }
.ftabs { display: flex; height: 36px; font-size: 13px; letter-spacing: -.2px; }
.ftabs div { width: 120px; height: 35px; background: #e4e4e4; border-left: 1px solid #d4d5d7; border-bottom: 1px solid #d4d5d7; text-align: center; line-height: 34px; color: #303030; -webkit-text-stroke: .25px #303030; }
.ftabs .on { background: none; border: 0; width: 119px; line-height: 37px; }
.fbody { padding: 12px 0 0 14px; width: 252px; }
h4 { margin: 0; font-size: 12.500px; line-height: 18px; height: 22px; letter-spacing: -.35px; white-space: nowrap; }
.h2 { margin-top: 8px; height: 22px; } .h3 { margin-top: 7px; line-height: 20px; height: 23px; }
.row { height: 24px; display: flex; align-items: center; letter-spacing: -.28px; }
.ck { width: 13px; height: 13px; border-radius: 2px; background: #0078d7; margin-right: 6px; position: relative; }
.ck::after { content: ""; position: absolute; left: 4px; top: 1px; width: 5px; height: 9px; border: solid #fff; border-width: 0 2px 2px 0; transform: rotate(42deg) scale(.9); }
.ck.no { background: #fff; border: 1px solid #767676; } .ck.no::after { display: none; }
.indent { margin-left: 19px; }
.gridctl { display: flex; }
.row .f1 { width: 81px; }
.num { width: 50px; height: 22px; background: #fff; border: 1px solid #d9dadc; border-radius: 4px; font: 14px/20px "Liberation Sans", Arial, sans-serif; text-align: right; padding-right: 2px; letter-spacing: -.15px; }
.spin { width: 12px; height: 22px; border: 1px solid #d9dadc; border-radius: 3px; margin: 0 4px 0 0; }
.colour { width: 46px; height: 22px; border: 1px solid #d9dadc; border-radius: 4px; display: flex; align-items: center; gap: 4px; padding-left: 3px; }
.colour i { width: 23px; height: 14px; background: #cfcfcf; }
.btn { border: 1px solid #d4d6d8; border-radius: 4px; height: 22px; font: 13.330px/21px "Liberation Sans", Arial, sans-serif; text-align: center; white-space: nowrap; color: #303030; }
.row .f3 { width: 83px; }
.change { width: 110px; letter-spacing: -.05px; }
.wide { width: 212px; margin-bottom: 2px; }
.select { width: 210px; height: 22px; border: 1px solid #d4d6d8; border-radius: 4px; display: flex; align-items: center; padding-left: 28px; font: 13.330px "Liberation Sans", Arial, sans-serif; letter-spacing: .04px; }
.select svg { margin-left: auto; margin-right: 3px; }
.radios { height: 36px; display: flex; align-items: center; padding: 0 0 6px 9px; letter-spacing: -.35px; }
.rd { width: 13px; height: 13px; flex: none; border: 1px solid #767676; border-radius: 50%; background: #fff; margin: -5px 6px 0 0; }
.rd.on { border-color: #0078d7; background: radial-gradient(circle, #0078d7 3.800px, #fff 4.500px); }
.radios .f9 { width: 113px; }

/* page tabs */
.pages { height: 31px; flex: none; display: flex; align-items: center; padding-left: 24px; }
.pm { margin-left: 25px; }
.page { margin-left: 21px; width: 88px; height: 31px; background: #e0e7f6; color: #1a5fd0; display: flex; align-items: center; padding-left: 16px; gap: 6px; font-size: 13px; letter-spacing: -.3px; }

/* system taskbar */
.taskbar { height: 40px; flex: none; background: linear-gradient(90deg, #d3d1de, #d6d3e0 60%, #dcd5e4); display: flex; color: #000; }
.start { width: 48px; display: flex; align-items: center; justify-content: center; }
.search { width: 288px; background: #fff; border: 1px solid #c8c6ce; display: flex; align-items: center; padding-left: 11px; font-size: 14px; letter-spacing: -.4px; color: #333; }
.search span { margin-left: 11px; }
.spark { margin-left: auto; margin-right: 9px; }
.app { width: 50px; display: flex; align-items: center; justify-content: center; }
.a1, .a3 { padding-right: 2px; }
.app.cur { width: 48px; margin-left: -1px; background: #eeedf2; border-bottom: 2px solid #0078d7; }
.tray { margin-left: auto; display: flex; align-items: center; gap: 10px; }
.lang { font-size: 12px; letter-spacing: -.6px; }
.clock { width: 62px; display: flex; flex-direction: column; align-items: center; line-height: 18px; font-size: 12px; letter-spacing: -.5px; }
.tray > svg:nth-last-of-type(1) { margin-left: 3px; }
.edge { width: 4px; height: 40px; border-left: 1px solid #aaa6b4; margin-left: 10px; }
```
